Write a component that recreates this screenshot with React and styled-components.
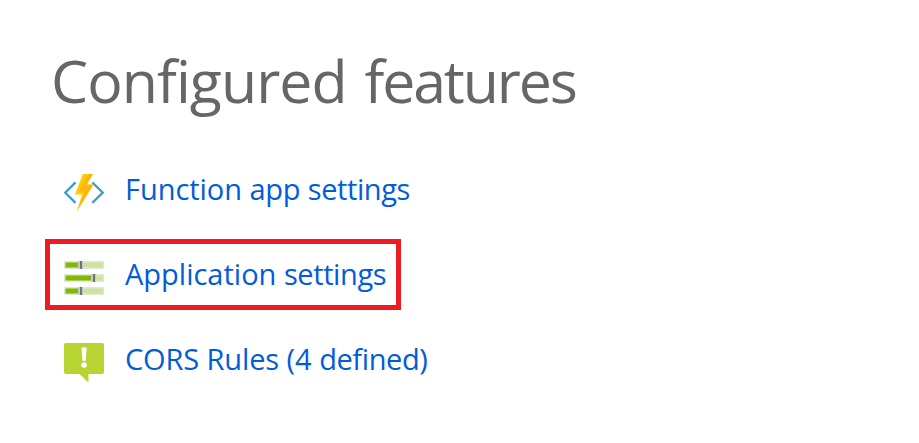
import React from "react";
import styled, { createGlobalStyle } from "styled-components";

const GlobalStyle = createGlobalStyle`
  * { box-sizing: border-box; }
  body {
    margin: 0;
    background: #ffffff;
    font-family: "Segoe UI", "Open Sans", "Noto Sans", sans-serif;
  }
`;

const Panel = styled.main`
  width: 919px;
  height: 443px;
  padding: 40px 0 0 45px;
  overflow: hidden;
`;

const Title = styled.h1`
  margin: 0 0 34px;
  padding-left: 6px;
  height: 80px;
  line-height: 80px;
  font-size: 59px;
  font-weight: 400;
  white-space: nowrap;
  color: #666666;
`;

const Word = styled.span`
  letter-spacing: ${(p) => p.$tracking}px;
`;

const FeatureList = styled.ul`
  display: flex;
  flex-direction: column;
  align-items: flex-start;
  gap: 14px;
  margin: 0;
  padding: 0;
  list-style: none;
`;

const Feature = styled.li`
  display: flex;
  align-items: flex-start;
  gap: 21px;
  width: 356px;
  height: 71px;
  padding: 9px 0 0 14px;
  border: 5px solid ${(p) => (p.$highlighted ? "#ed1c24" : "transparent")};
`;

const Icon = styled.svg`
  flex: none;
  width: 40px;
  height: 45px;
`;

const FeatureLink = styled.a`
  height: 44px;
  line-height: 42px;
  font-size: 29px;
  white-space: nowrap;
  color: #015cda;
  text-decoration: none;
`;

const FunctionIcon = () => (
  <Icon viewBox="0 0 40 45">
    <path d="M11.5 14.4 1.2 24.6 11.5 34.9M28.3 14.4 38.8 24.6 28.3 34.9" fill="none" stroke="#3c9bcf" strokeWidth="2.2" />
    <path d="M18.8 6H29L22.8 16.6H29.4L13 43.2 18 26.4H11Z" fill="#ffca08" />
    <path d="M29 6 22.8 16.6H29.4L13 43.2 20.6 23.2H14.8L24.3 6Z" fill="#fbad10" opacity=".75" />
  </Icon>
);

const sliders = [
  { y: 8, knob: 14.5 },
  { y: 21, knob: 27.5 },
  { y: 34, knob: 14.5 },
];

const SlidersIcon = () => (
  <Icon viewBox="0 0 40 45">
    {sliders.map(({ y, knob }) => (
      <g key={y}>
        <path d={`M0 ${y}h40v8H0z`} fill="#e3e6df" />
        <path d={`M1.5 ${y + 1.5}h37.5v5H1.5z`} fill="#cce49a" />
        <path d={`M1.5 ${y + 1.5}h${knob - 2}v5H1.5z`} fill="#7fba00" />
        <path d={`M${knob - 0.5} ${y}h5v8h-5z`} fill="#c8c8c8" />
        <path d={`M${knob + 1.5} ${y}h2v8h-2z`} fill="#737373" />
      </g>
    ))}
  </Icon>
);

const MessageIcon = () => (
  <Icon viewBox="0 0 40 45">
    <path d="M2 5H38Q40 5 40 7V34Q40 36 38 36H24.5V44.6L15.5 36H2Q0 36 0 34V7Q0 5 2 5Z" fill="#b8d432" />
    <path d="M17.5 9.5H22.7L21.8 22.7H18.4Z" fill="#fff" />
    <circle cx="20.1" cy="27" r="2.8" fill="#fff" />
  </Icon>
);

const features = [
  { words: [["Function ", -0.05], ["app ", -0.2], ["settings", -0.4]], Glyph: FunctionIcon },
  { words: [["Application ", 0], ["settings", -0.4]], Glyph: SlidersIcon, highlighted: true },
  { words: [["CORS ", -0.15], ["Rules ", -0.1], ["(4 ", 0], ["defined)", -0.4]], Glyph: MessageIcon },
];

const titleWords = [["Configured", -0.95], [" ", 2.5], ["features", -2.15]];

const Words = ({ items }) =>
  items.map(([text, tracking]) => (
    <Word key={text} $tracking={tracking}>{text}</Word>
  ));

export default function App() {
  return (
    <>
      <GlobalStyle />
      <Panel>
        <Title><Words items={titleWords} /></Title>
        <FeatureList>
          {features.map(({ words, Glyph, highlighted }) => (
            <Feature key={words[0][0]} $highlighted={highlighted}>
              <Glyph />
              <FeatureLink><Words items={words} /></FeatureLink>
            </Feature>
          ))}
        </FeatureList>
      </Panel>
    </>
  );
}
